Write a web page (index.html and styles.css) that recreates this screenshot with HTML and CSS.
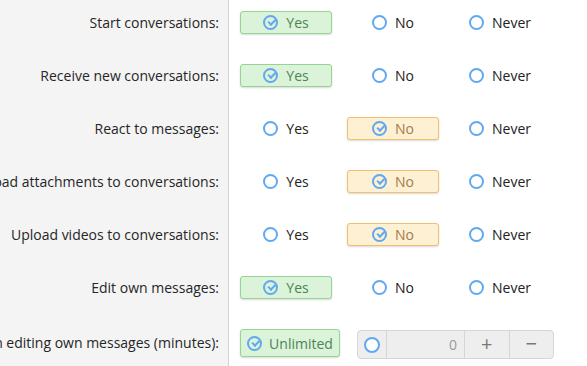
FILE: index.html
```html
<!DOCTYPE html>
<html>
<head>
<meta charset="utf-8">
<link rel="stylesheet" href="styles.css">
</head>
<body>
<div class="form">
  <div class="row">
    <div class="label"><span>Start conversations:</span></div>
    <div class="controls">
      <div class="opt sel-yes"><span class="check"></span>Yes</div>
      <div class="opt"><span class="radio"></span>No</div>
      <div class="opt"><span class="radio"></span>Never</div>
    </div>
  </div>
  <div class="row">
    <div class="label"><span>Receive new conversations:</span></div>
    <div class="controls">
      <div class="opt sel-yes"><span class="check"></span>Yes</div>
      <div class="opt"><span class="radio"></span>No</div>
      <div class="opt"><span class="radio"></span>Never</div>
    </div>
  </div>
  <div class="row">
    <div class="label"><span>React to messages:</span></div>
    <div class="controls">
      <div class="opt"><span class="radio"></span>Yes</div>
      <div class="opt sel-no"><span class="check"></span>No</div>
      <div class="opt"><span class="radio"></span>Never</div>
    </div>
  </div>
  <div class="row">
    <div class="label"><span>Upload attachments to conversations:</span></div>
    <div class="controls">
      <div class="opt"><span class="radio"></span>Yes</div>
      <div class="opt sel-no"><span class="check"></span>No</div>
      <div class="opt"><span class="radio"></span>Never</div>
    </div>
  </div>
  <div class="row">
    <div class="label"><span>Upload videos to conversations:</span></div>
    <div class="controls">
      <div class="opt"><span class="radio"></span>Yes</div>
      <div class="opt sel-no"><span class="check"></span>No</div>
      <div class="opt"><span class="radio"></span>Never</div>
    </div>
  </div>
  <div class="row">
    <div class="label"><span>Edit own messages:</span></div>
    <div class="controls">
      <div class="opt sel-yes"><span class="check"></span>Yes</div>
      <div class="opt"><span class="radio"></span>No</div>
      <div class="opt"><span class="radio"></span>Never</div>
    </div>
  </div>
  <div class="row last">
    <div class="label"><span>Time limit on editing own messages (minutes):</span></div>
    <div class="controls wide">
      <div class="opt sel-yes unlimited"><span class="check"></span>Unlimited</div>
      <div class="num">
        <div class="num-radio"><span class="radio big"></span></div>
        <div class="num-input">0</div>
        <div class="num-btn">+</div>
        <div class="num-btn">&minus;</div>
      </div>
    </div>
  </div>
</div>
</body>
</html>
```
FILE: styles.css
```css
html, body {
  margin: 0;
  padding: 0;
  background: #ffffff;
  overflow: hidden;
}
body {
  font-family: "Open Sans", "Noto Sans", sans-serif;
  font-size: 14px;
  color: #222;
  width: 587px;
  height: 366px;
}
.form {
  display: flex;
  flex-direction: column;
  height: 366px;
}
.row {
  display: grid;
  grid-template-columns: 229px 1fr;
}
.row.last {
  flex: 1;
}
.label {
  background: #f4f4f4;
  border-right: 1px solid #d4d4d4;
  padding: 11px 9px 19px 0;
  height: 23px;
  line-height: 23px;
  display: flex;
  justify-content: flex-end;
  white-space: nowrap;
  overflow: hidden;
  color: #262626;
}
.label span {
  flex: none;
}
.row.last .label {
  height: 28px;
  line-height: 28px;
}
.controls {
  padding: 11px 0 19px 11px;
  display: grid;
  grid-template-columns: 92px 92px 92px;
  column-gap: 15px;
}
.controls.wide {
  display: flex;
  gap: 17px;
  align-items: flex-start;
}
.opt {
  height: 23px;
  box-sizing: border-box;
  display: flex;
  align-items: center;
  justify-content: center;
  gap: 8px;
  border: 1px solid transparent;
  border-radius: 3px;
}
.sel-yes {
  background: #daf3d9;
  border-color: #94d594;
  color: #4d8456;
  box-shadow: 0 1px 2px rgba(0,0,0,0.15);
}
.sel-no {
  background: #fdf0d3;
  border-color: #f0c070;
  color: #a47b4a;
  box-shadow: 0 1px 2px rgba(0,0,0,0.15);
}
.unlimited {
  width: 100px;
  height: 28px;
  gap: 7px;
}
.radio {
  width: 15px;
  height: 15px;
  box-sizing: border-box;
  border: 2px solid #62a8f0;
  border-radius: 50%;
  background: #fff;
  flex: none;
}
.radio.big {
  width: 16px;
  height: 16px;
}
.check {
  width: 15px;
  height: 15px;
  box-sizing: border-box;
  border: 2px solid #62a8f0;
  border-radius: 50%;
  position: relative;
  flex: none;
}
.check::after {
  content: "";
  position: absolute;
  left: 2.6px;
  top: 2.4px;
  width: 5.5px;
  height: 2.8px;
  border-left: 2px solid #62a8f0;
  border-bottom: 2px solid #62a8f0;
  transform: rotate(-45deg);
}
.num {
  display: flex;
  height: 29px;
  width: 197px;
  box-sizing: border-box;
  margin-top: 1px;
  border: 1px solid #d6d6d6;
  border-radius: 4px;
  background: #eeeeee;
}
.num-radio {
  width: 28px;
  border-right: 1px solid #d6d6d6;
  display: flex;
  align-items: center;
  justify-content: center;
}
.num-input {
  width: 78px;
  border-right: 1px solid #d6d6d6;
  text-align: right;
  padding-right: 7px;
  box-sizing: border-box;
  line-height: 27px;
  color: #9a9a9a;
  font-size: 14px;
}
.num-btn {
  flex: 1;
  text-align: center;
  line-height: 26px;
  font-size: 20px;
  color: #777;
}
.num-btn + .num-btn {
  border-left: 1px solid #d6d6d6;
}
```
